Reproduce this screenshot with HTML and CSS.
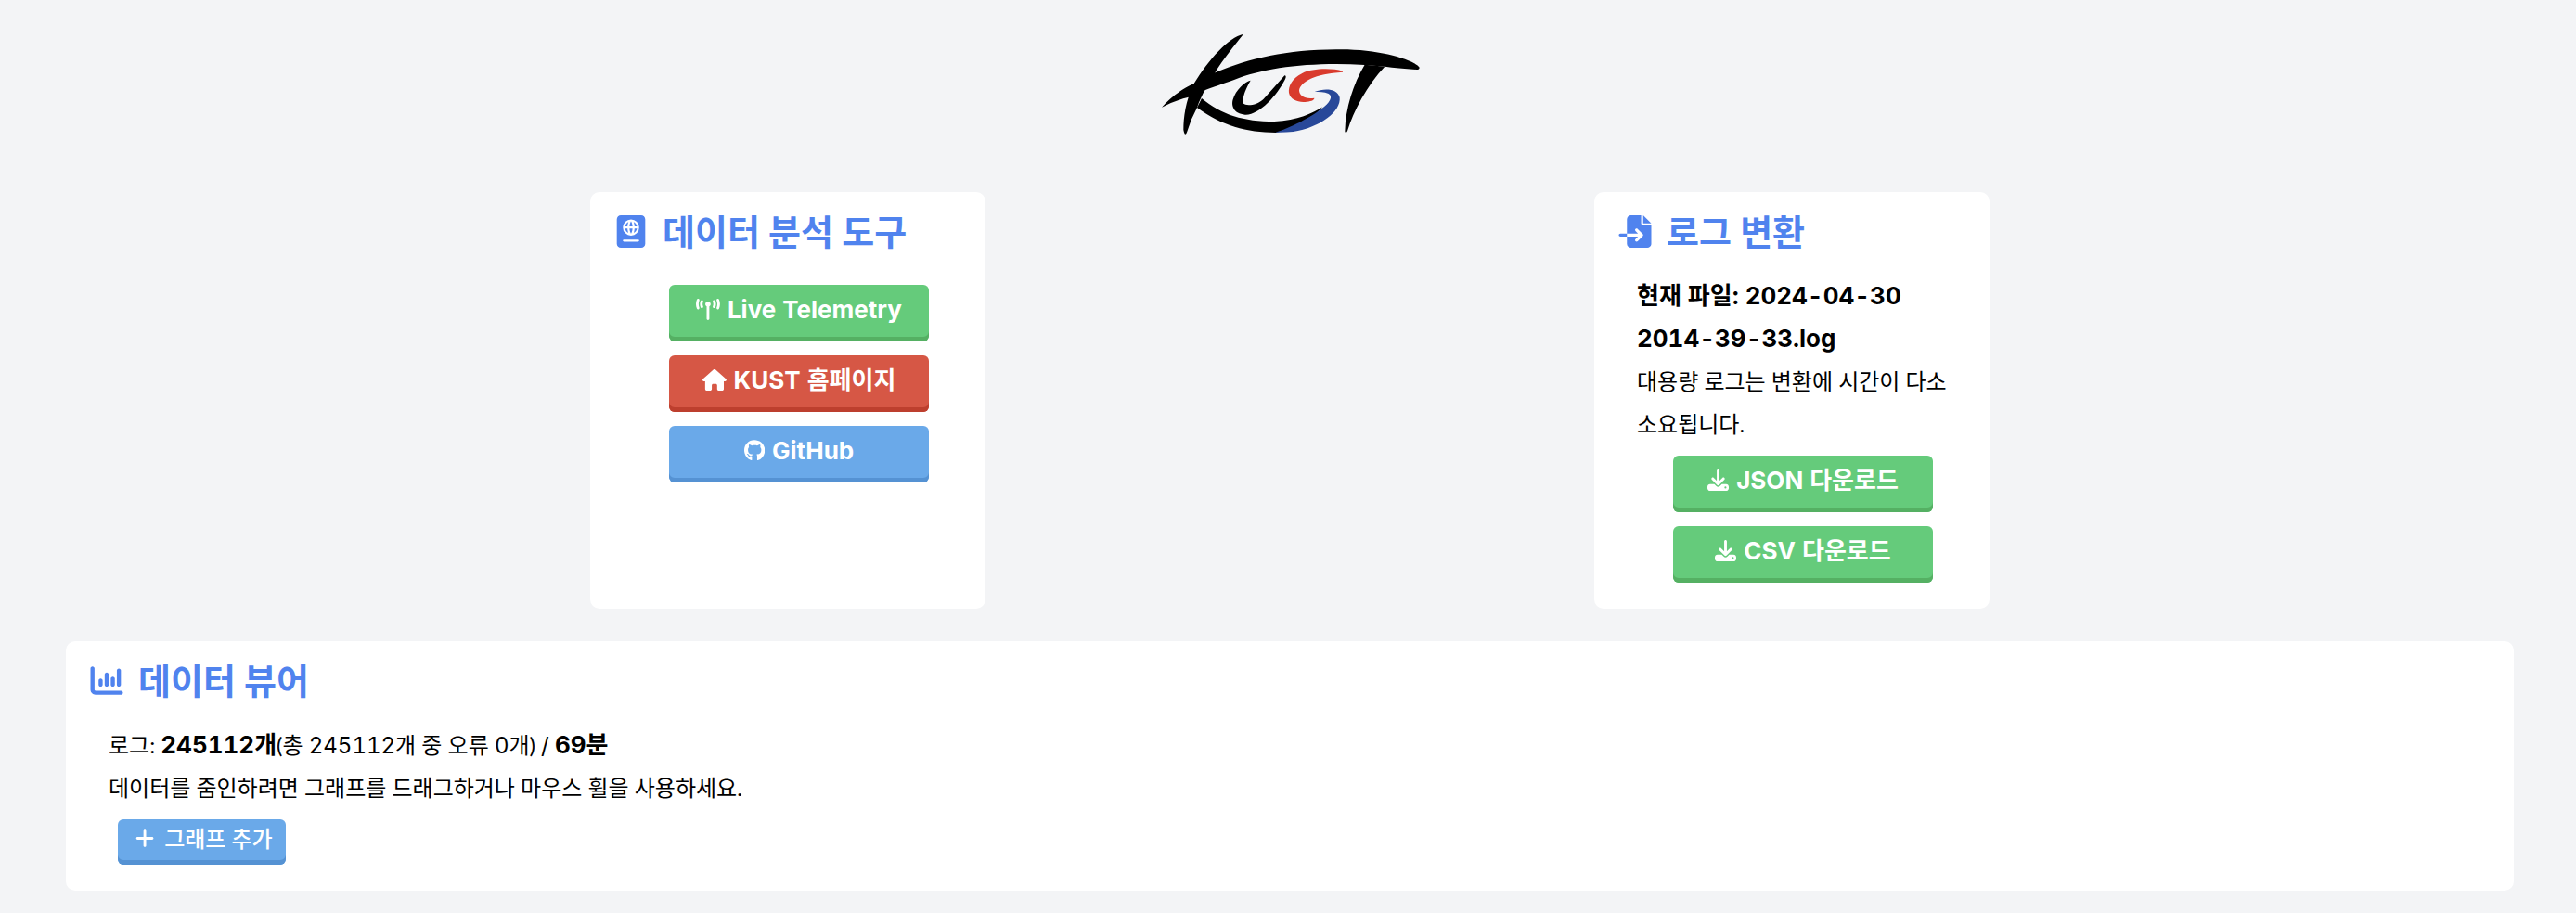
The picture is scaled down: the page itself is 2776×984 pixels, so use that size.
FILE: index.html
```html
<!DOCTYPE html>
<html lang="ko">
<head>
<meta charset="utf-8">
<title>KUST</title>
<link rel="stylesheet" href="styles.css">
</head>
<body>
<header class="site-header">
  <svg class="logo" viewBox="0 0 900 420" role="img" aria-label="KUST">
    <path d="M300 50C250 62 190 130 140 210C112 268 106 320 106 360Q111 386 118 365Q130 325 150 288C165 245 190 205 208 175C235 130 270 88 300 50Z"/>
    <path d="M36 287C60 258 100 228 140 210L208 175C320 128 440 101 600 100C740 97 855 135 869 158Q869 165 860 165Q800 161 757 155L692 150C520 140 370 158 270 198C230 212 200 222 175 232C165 243 140 252 120 255Q75 266 36 287Z"/>
    <path d="M165 258C230 312 300 333 400 333C475 331 525 305 556 286L500 345L405 369C310 368 230 347 150 288Z"/>
    <path d="M323 200C300 238 298 262 298 274C310 285 345 280 365 260Q400 222 433 184Q440 184 435 196C408 250 350 314 305 311C268 308 260 282 266 262C274 232 305 203 323 200Z"/>
    <path d="M692 149C655 210 630 290 628 365Q631 374 636 364C655 300 700 215 757 155Z"/>
    <path class="logo-red" d="M621 170C585 159 520 161 490 177C455 195 445 220 447 240C452 264 480 273 505 269C522 267 530 262 529 257C500 262 480 250 480 232C484 205 530 178 621 173Z"/>
    <path class="logo-blue" d="M530 237C562 224 604 226 611 255C616 300 550 352 460 366Q430 369 403 368C450 354 520 318 550 293C580 274 591 250 575 243C560 236 545 238 530 237Z"/>
  </svg>
</header>

<main>
  <div class="row">
    <section class="card card-small">
      <h2 class="card-title">
        <svg class="title-icon" viewBox="0 0 448 512" aria-hidden="true"><path fill-rule="evenodd" d="M0 64C0 28.7 28.7 0 64 0H384c35.3 0 64 28.7 64 64V448c0 35.3-28.7 64-64 64H64c-35.3 0-64-28.7-64-64V64zM183 278.8c-27.9-13.2-48.4-39.4-53.7-70.8h39.1c1.6 30.4 7.7 53.8 14.6 70.8zm41.3 9.2l-.3 0-.3 0c-2.4-3.5-5.7-8.9-9.1-16.5c-6-13.6-12.4-34.3-14.2-63.5h47.1c-1.8 29.2-8.1 49.9-14.2 63.5c-3.4 7.6-6.7 13-9.1 16.5zm40.7-9.2c6.8-17.1 12.9-40.4 14.6-70.8h39.1c-5.3 31.4-25.8 57.6-53.7 70.8zM279.6 176c-1.6-30.4-7.7-53.8-14.6-70.8c27.9 13.2 48.4 39.4 53.7 70.8H279.6zM223.7 96l.3 0 .3 0c2.4 3.5 5.7 8.9 9.1 16.5c6 13.6 12.4 34.3 14.2 63.5H200.5c1.8-29.2 8.1-49.9 14.2-63.5c3.4-7.6 6.7-13 9.1-16.5zM183 105.2c-6.8 17.1-12.9 40.4-14.6 70.8H129.3c5.3-31.4 25.8-57.6 53.7-70.8zM352 192A128 128 0 1 0 96 192a128 128 0 1 0 256 0zM112 384c-8.8 0-16 7.2-16 16s7.2 16 16 16H336c8.8 0 16-7.2 16-16s-7.2-16-16-16H112z"/></svg>
        <span>데이터 분석 도구</span>
      </h2>
      <div class="card-body">
        <div class="actions">
          <button class="btn btn-green" type="button">
            <svg class="btn-icon" viewBox="0 0 576 512" aria-hidden="true"><path d="M80.3 44C69.8 69.9 64 98.2 64 128s5.8 58.1 16.3 84c6.6 16.4-1.3 35-17.7 41.7s-35-1.3-41.7-17.7C7.4 202.6 0 166.1 0 128S7.4 53.4 20.9 20C27.6 3.6 46.2-4.3 62.6 2.3S86.9 27.6 80.3 44zM555.1 20C568.6 53.4 576 89.9 576 128s-7.4 74.6-20.9 108c-6.6 16.4-25.3 24.3-41.7 17.7S489.1 228.4 495.7 212c10.5-25.9 16.3-54.2 16.3-84s-5.8-58.1-16.3-84C489.1 27.6 497 9 513.4 2.3s35 1.3 41.7 17.7zM352 128c0 23.7-12.9 44.4-32 55.4V480c0 17.7-14.3 32-32 32s-32-14.3-32-32V183.4c-19.1-11.1-32-31.7-32-55.4c0-35.3 28.7-64 64-64s64 28.7 64 64zM170.6 76.8C163.8 92.4 160 109.7 160 128s3.8 35.6 10.6 51.2c7.1 16.2-.3 35.1-16.5 42.1s-35.1-.3-42.1-16.5c-10.3-23.6-16-49.6-16-76.8s5.7-53.2 16-76.8c7.1-16.2 25.9-23.6 42.1-16.5s23.6 25.9 16.5 42.1zM464 51.2c10.3 23.6 16 49.6 16 76.8s-5.7 53.2-16 76.8c-7.1 16.2-25.9 23.6-42.1 16.5s-23.6-25.9-16.5-42.1c6.8-15.6 10.6-32.9 10.6-51.2s-3.8-35.6-10.6-51.2c-7.1-16.2 .3-35.1 16.5-42.1s35.1 .3 42.1 16.5z"/></svg>
            <span class="latin">Live Telemetry</span>
          </button>
          <a class="btn btn-red" href="#">
            <svg class="btn-icon" viewBox="0 0 576 512" aria-hidden="true"><path d="M575.8 255.5c0 18-15 32.1-32 32.1h-32l.7 160.2c0 2.7-.2 5.4-.5 8.1V472c0 22.1-17.9 40-40 40H456c-1.1 0-2.2 0-3.3-.1c-1.4 .1-2.8 .1-4.2 .1H416 392c-22.1 0-40-17.9-40-40V448 384c0-17.7-14.3-32-32-32H256c-17.7 0-32 14.3-32 32v64 24c0 22.1-17.9 40-40 40H160 128.1c-1.5 0-3-.1-4.5-.2c-1.2 .1-2.4 .2-3.6 .2H104c-22.1 0-40-17.9-40-40V360c0-.9 0-1.9 .1-2.8V287.6H32c-18 0-32-14-32-32.1c0-9 3-17 10-24L266.4 8c7-7 15-8 22-8s15 2 21 7L564.8 231.5c8 7 12 15 11 24z"/></svg>
            <span class="latin">KUST 홈페이지</span>
          </a>
          <a class="btn btn-blue" href="#">
            <svg class="btn-icon" viewBox="0 0 496 512" aria-hidden="true"><path d="M244.8 8C106.1 8 0 113.3 0 252c0 110.9 69.8 205.8 169.5 239.2 12.8 2.3 17.3-5.6 17.3-12.1 0-6.2-.3-40.4-.3-61.4 0 0-70 15-84.7-29.8 0 0-11.4-29.1-27.8-36.6 0 0-22.9-15.7 1.6-15.4 0 0 24.9 2 38.6 25.8 21.9 38.6 58.6 27.5 72.9 20.9 2.3-16 8.8-27.1 16-33.7-55.9-6.2-112.3-14.3-112.3-110.5 0-27.5 7.6-41.3 23.6-58.9-2.6-6.5-11.1-33.3 2.6-67.9 20.9-6.5 69 27 69 27 20-5.6 41.5-8.5 62.8-8.5s42.8 2.9 62.8 8.5c0 0 48.1-33.6 69-27 13.7 34.7 5.2 61.4 2.6 67.9 16 17.7 25.8 31.5 25.8 58.9 0 96.5-58.9 104.2-114.8 110.5 9.2 7.9 17 22.9 17 46.4 0 33.7-.3 75.4-.3 83.6 0 6.5 4.6 14.4 17.3 12.1C428.2 457.8 496 362.9 496 252 496 113.3 383.5 8 244.8 8z"/></svg>
            <span class="latin">GitHub</span>
          </a>
        </div>
      </div>
    </section>

    <section class="card card-small">
      <h2 class="card-title">
        <svg class="title-icon" viewBox="0 0 512 512" aria-hidden="true"><path d="M128 64c0-35.3 28.7-64 64-64H352V128c0 17.7 14.3 32 32 32H512V448c0 35.3-28.7 64-64 64H192c-35.3 0-64-28.7-64-64V336H302.1l-39 39c-9.4 9.4-9.4 24.6 0 33.9s24.6 9.4 33.9 0l80-80c9.4-9.4 9.4-24.6 0-33.9l-80-80c-9.4-9.4-24.6-9.4-33.9 0s-9.4 24.6 0 33.9l39 39H128V64zm0 224v48H24c-13.3 0-24-10.7-24-24s10.7-24 24-24H128zM512 128H384V0L512 128z"/></svg>
        <span>로그 변환</span>
      </h2>
      <div class="card-body">
        <p><b class="latin">현재 파일: 2024-04-30 <span class="nowrap">2014-39-33.log</span></b></p>
        <p>대용량 로그는 변환에 시간이 다소 소요됩니다.</p>
        <div class="actions">
          <button class="btn btn-green" type="button">
            <svg class="btn-icon" viewBox="0 0 512 512" aria-hidden="true"><path d="M288 32c0-17.7-14.3-32-32-32s-32 14.3-32 32V274.7l-73.4-73.4c-12.5-12.5-32.8-12.5-45.3 0s-12.5 32.8 0 45.3l128 128c12.5 12.5 32.8 12.5 45.3 0l128-128c12.5-12.5 12.5-32.8 0-45.3s-32.8-12.5-45.3 0L288 274.7V32zM64 352c-35.3 0-64 28.7-64 64v32c0 35.3 28.7 64 64 64H448c35.3 0 64-28.7 64-64V416c0-35.3-28.7-64-64-64H346.5l-45.3 45.3c-25 25-65.5 25-90.5 0L165.5 352H64zm368 56a24 24 0 1 1 0 48 24 24 0 1 1 0-48z"/></svg>
            <span class="latin">JSON 다운로드</span>
          </button>
          <button class="btn btn-green" type="button">
            <svg class="btn-icon" viewBox="0 0 512 512" aria-hidden="true"><path d="M288 32c0-17.7-14.3-32-32-32s-32 14.3-32 32V274.7l-73.4-73.4c-12.5-12.5-32.8-12.5-45.3 0s-12.5 32.8 0 45.3l128 128c12.5 12.5 32.8 12.5 45.3 0l128-128c12.5-12.5 12.5-32.8 0-45.3s-32.8-12.5-45.3 0L288 274.7V32zM64 352c-35.3 0-64 28.7-64 64v32c0 35.3 28.7 64 64 64H448c35.3 0 64-28.7 64-64V416c0-35.3-28.7-64-64-64H346.5l-45.3 45.3c-25 25-65.5 25-90.5 0L165.5 352H64zm368 56a24 24 0 1 1 0 48 24 24 0 1 1 0-48z"/></svg>
            <span class="latin">CSV 다운로드</span>
          </button>
        </div>
      </div>
    </section>
  </div>

  <div class="viewer">
    <section class="card">
      <h2 class="card-title">
        <svg class="title-icon" viewBox="0 0 512 512" aria-hidden="true"><path d="M32 32c17.7 0 32 14.3 32 32V400c0 8.8 7.2 16 16 16H480c17.7 0 32 14.3 32 32s-14.3 32-32 32H80c-44.2 0-80-35.8-80-80V64C0 46.3 14.3 32 32 32zM160 224c17.7 0 32 14.3 32 32v64c0 17.7-14.3 32-32 32s-32-14.3-32-32V256c0-17.7 14.3-32 32-32zm128-64V320c0 17.7-14.3 32-32 32s-32-14.3-32-32V160c0-17.7 14.3-32 32-32s32 14.3 32 32zm64 32c17.7 0 32 14.3 32 32v96c0 17.7-14.3 32-32 32s-32-14.3-32-32V224c0-17.7 14.3-32 32-32zM480 96V320c0 17.7-14.3 32-32 32s-32-14.3-32-32V96c0-17.7 14.3-32 32-32s32 14.3 32 32z"/></svg>
        <span>데이터 뷰어</span>
      </h2>
      <div class="card-body">
        <p>로그: <b class="latin">245112개</b>(총 <span class="latin">245112</span>개 중 오류 <span class="latin">0</span>개) <span class="latin">/</span> <b class="latin">69분</b></p>
        <p>데이터를 줌인하려면 그래프를 드래그하거나 마우스 휠을 사용하세요.</p>
        <div class="actions actions-start">
          <button class="btn btn-blue btn-add" type="button">
            <svg class="btn-icon" viewBox="0 0 448 512" aria-hidden="true"><path d="M256 80c0-17.7-14.3-32-32-32s-32 14.3-32 32V224H48c-17.7 0-32 14.3-32 32s14.3 32 32 32H192V432c0 17.7 14.3 32 32 32s32-14.3 32-32V288H400c17.7 0 32-14.3 32-32s-14.3-32-32-32H256V80z"/></svg>
            <span>그래프 추가</span>
          </button>
        </div>
      </div>
    </section>
  </div>
</main>
</body>
</html>
```

FILE: styles.css
```css
* {
  box-sizing: border-box;
}

body {
  margin: 0;
  padding: 20px 0 24px 4px;
  background: #f3f4f6;
  color: #000;
  font-family: Lato, "Noto Sans CJK KR", sans-serif;
  font-size: 24px;
  line-height: 46px;
}

b {
  font-size: 26px;
  font-weight: 700;
}

.latin {
  font-family: Inter, "Noto Sans CJK KR", sans-serif;
  font-variant-numeric: tabular-nums;
  line-height: 24px;
}

.nowrap {
  white-space: nowrap;
}

.site-header {
  display: flex;
  justify-content: center;
  margin-bottom: 47px;
}

.logo {
  width: 300px;
  height: 140px;
}

.logo-red {
  fill: #d93b2d;
}

.logo-blue {
  fill: #284899;
}

.row {
  display: flex;
  flex-wrap: wrap;
  justify-content: space-evenly;
  margin-bottom: 35px;
}

.viewer {
  padding: 0 67px;
}

.card {
  padding: 20px 22px 28px;
  border-radius: 10px;
  background: #fff;
}

.card-small {
  width: 426px;
  margin: 0 24px;
}

.card-title {
  display: flex;
  align-items: center;
  gap: 12px;
  margin: 0 0 25px;
  color: #5083ee;
  font-size: 38px;
  font-weight: 700;
  line-height: 44px;
}

.title-icon {
  width: 44px;
  height: 35px;
  fill: currentColor;
}

.card-body {
  padding-left: 24px;
}

.card-body p {
  margin: 0;
}

.actions {
  display: flex;
  flex-direction: column;
  align-items: center;
  gap: 15px;
  padding-top: 11px;
}

.actions-start {
  align-items: flex-start;
  padding-left: 10px;
}

.btn {
  display: flex;
  align-items: center;
  justify-content: center;
  gap: 8px;
  width: 280px;
  height: 61px;
  padding: 0 0 8px;
  border: 0;
  border-radius: 6px;
  color: #fff;
  font-family: inherit;
  font-size: 26px;
  font-weight: 700;
  line-height: 46px;
  text-decoration: none;
  white-space: nowrap;
  cursor: pointer;
}

.btn-icon {
  height: 23px;
  fill: currentColor;
}

.btn-green {
  background: #65cb7b;
  box-shadow: inset 0 -5px #55b063;
}

.btn-red {
  background: #d65745;
  box-shadow: inset 0 -5px #bd3f2e;
}

.btn-blue {
  background: #6aa9e9;
  box-shadow: inset 0 -5px #5592d3;
}

.btn-add {
  gap: 11px;
  width: auto;
  height: 49px;
  padding: 0 14px 8px 19px;
  font-size: 24px;
  font-weight: 500;
}
```
